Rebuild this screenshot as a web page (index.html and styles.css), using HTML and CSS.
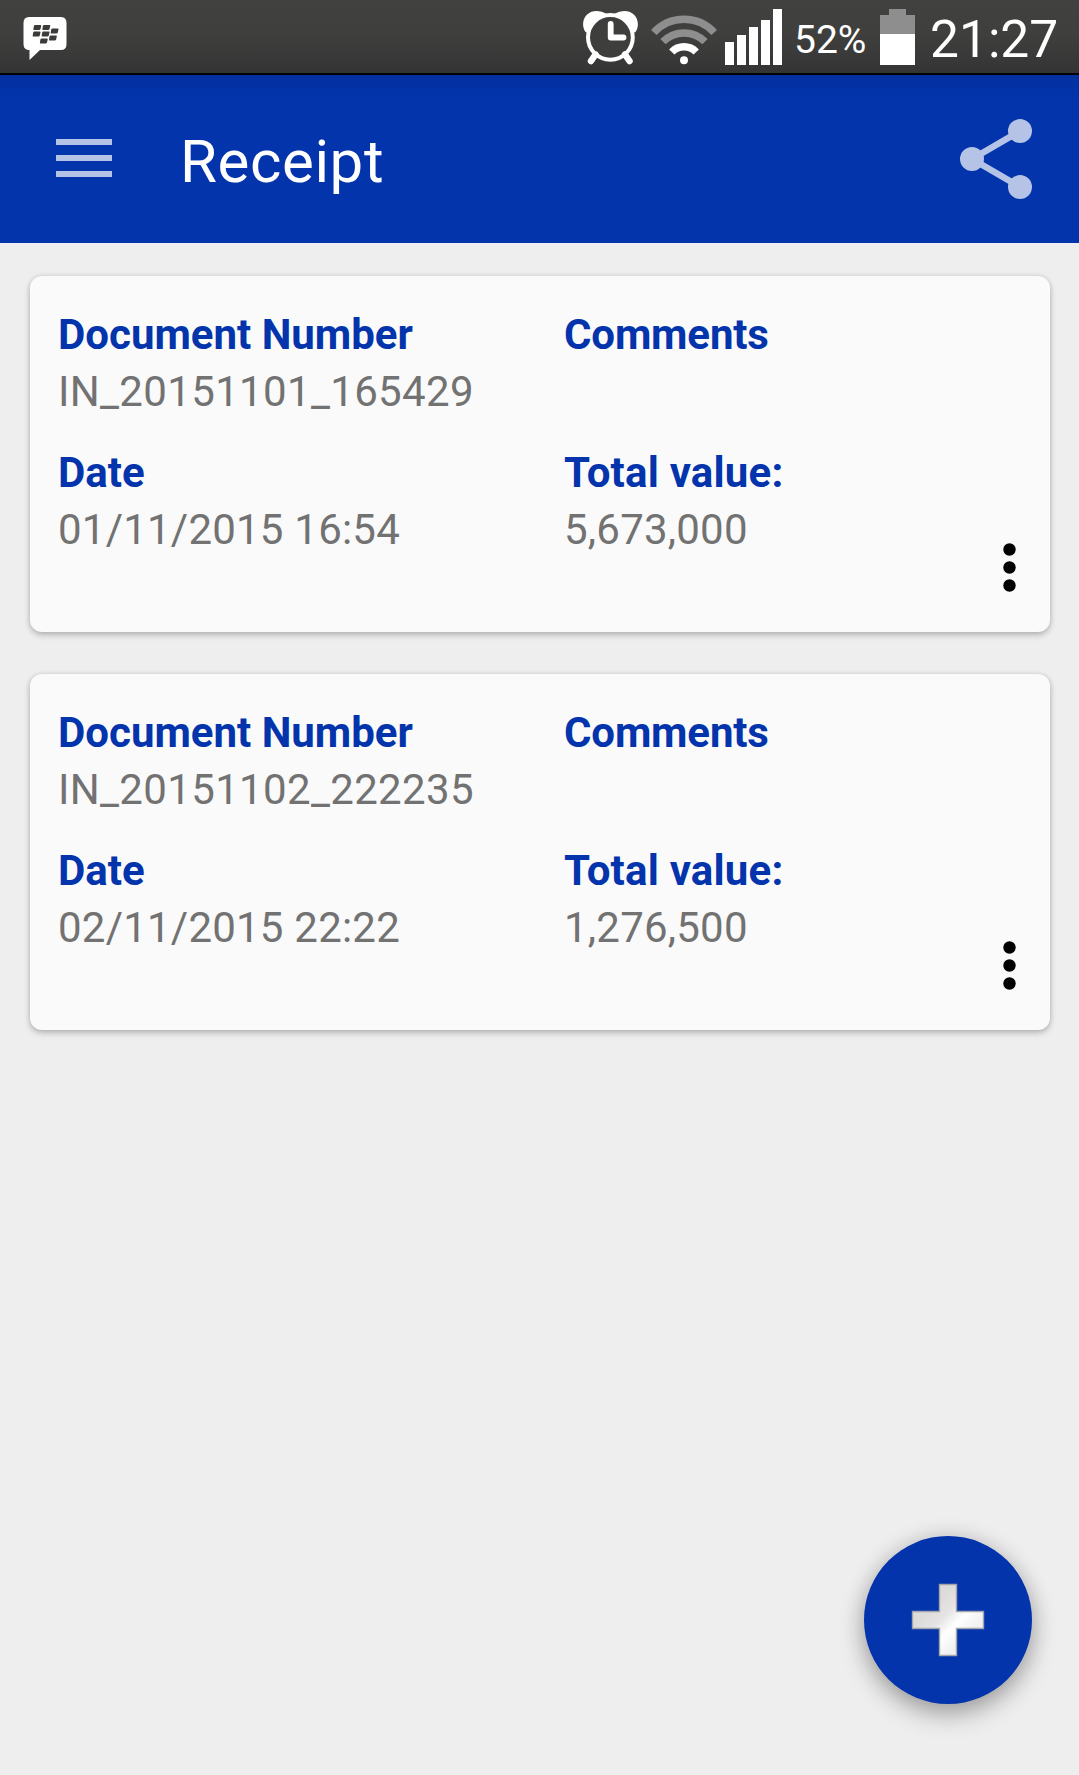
FILE: index.html
```
<!DOCTYPE html>
<html lang="en">
<head>
<meta charset="utf-8">
<title>Receipt</title>
<link rel="stylesheet" href="styles.css">
</head>
<body>
<header class="status-bar">
  <svg class="bbm-icon" width="44" height="44" viewBox="0 0 44 44">
    <path fill="#fff" d="M6 0H38Q43.500 0 43.500 6V27Q43.500 33 38 33H17L6.500 43V33Q0.500 33 0.500 27V6Q0.500 0 6 0Z"/>
    <g fill="#3c3d3b">
      <path d="M12 8h5.500q1 0 .7 1l-.7 3q-.3 1-1.300 1h-5.200q-.8 0-.6-1l.5-3q.2-1 1.100-1z"/>
      <path d="M21 8h5.500q1 0 .7 1l-.7 3q-.3 1-1.300 1h-5.200q-.8 0-.6-1l.5-3q.2-1 1.100-1z"/>
      <path d="M11.300 14.500h5.500q1 0 .7 1l-.7 3q-.3 1-1.300 1h-5.200q-.8 0-.6-1l.5-3q.2-1 1.100-1z"/>
      <path d="M20.300 14.500h5.500q1 0 .7 1l-.7 3q-.3 1-1.300 1h-5.200q-.8 0-.6-1l.5-3q.2-1 1.100-1z"/>
      <path d="M29.300 11.500h5.500q1 0 .7 1l-.7 3q-.3 1-1.300 1h-5.200q-.8 0-.6-1l.5-3q.2-1 1.100-1z"/>
      <path d="M27.600 18.500h5.500q1 0 .7 1l-.7 3q-.3 1-1.300 1h-5.200q-.8 0-.6-1l.5-3q.2-1 1.100-1z"/>
      <path d="M18.500 21.500h5.500q1 0 .7 1l-.7 3q-.3 1-1.300 1h-5.200q-.8 0-.6-1l.5-3q.2-1 1.100-1z"/>
    </g>
  </svg>
  <div class="status-icons">
    <svg width="56" height="56" viewBox="0 0 56 56">
      <path fill="#fff" d="M3.500 23C-2 15 2 2 15 2Q20 2 24 4.500L20 14L10 25ZM53.500 23C59 15 55 2 42 2Q37 2 33 4.500L37 14L47 25Z"/>
      <circle cx="28.400" cy="28.300" r="23.500" fill="#3e3f3d"/>
      <circle cx="28.400" cy="28.300" r="22.400" fill="none" stroke="#fff" stroke-width="4"/>
      <path d="M13.500 45.500l-4.500 6.500M43 45.500l4.500 6.500" stroke="#fff" stroke-width="6.500" stroke-linecap="round"/>
      <path d="M28.700 15V28.500H41.500" fill="none" stroke="#fff" stroke-width="5.800" stroke-linecap="round" stroke-linejoin="round"/>
    </svg>
    <svg class="wifi" width="66" height="50" viewBox="0 0 66 50">
      <g fill="none" stroke-width="7.500">
        <path d="M2.800 17.500A41 41 0 0 1 63.200 17.500" stroke="#8e8e8e"/>
        <path d="M12 26.700A29.500 29.500 0 0 1 54 26.700" stroke="#8e8e8e"/>
        <path d="M20.800 37A17 17 0 0 1 45.200 37" stroke="#fff"/>
      </g>
      <circle cx="33" cy="45.200" r="4" fill="#fff"/>
    </svg>
    <svg class="signal" width="57" height="56" viewBox="0 0 57 56">
      <path fill="#fff" d="M0 33h9v23H0zM12 26h9v30h-9zM24 18h9v38h-9zM36 11h9v45h-9zM48 0h9v56h-9z"/>
    </svg>
    <span class="battery-level">52%</span>
    <svg class="battery" width="35" height="56" viewBox="0 0 35 56">
      <path fill="#8e8e8e" d="M9 0h17v6h9v19H0V6h9z"/>
      <path fill="#fff" d="M0 25h35v31H0z"/>
    </svg>
    <span class="clock">21:27</span>
  </div>
</header>
<nav class="app-bar">
  <svg class="menu" width="56" height="38" viewBox="0 0 56 38"><path fill="#b4c3e6" d="M0 0h56v6H0zM0 16h56v6H0zM0 32h56v6H0z"/></svg>
  <h1 class="title">Receipt</h1>
  <svg class="share" width="72" height="80" viewBox="0 0 72 80">
    <path d="M12 40L60 12M12 40L60 68" stroke="#b4c3e6" stroke-width="6.500"/>
    <g fill="#b4c3e6"><circle cx="12" cy="40" r="12"/><circle cx="60" cy="12" r="12"/><circle cx="60" cy="68" r="12"/></g>
  </svg>
</nav>
<main class="list">
  <article class="card">
    <dl class="fields">
      <div><dt>Document Number</dt><dd class="doc-number">IN_20151101_165429</dd></div>
      <div><dt class="comments">Comments</dt></div>
      <div><dt>Date</dt><dd>01/11/2015 16:54</dd></div>
      <div><dt class="total">Total value:</dt><dd>5,673,000</dd></div>
    </dl>
    <svg class="more" width="13" height="50" viewBox="0 0 13 50"><circle cx="6.500" cy="6.500" r="6.200"/><circle cx="6.500" cy="24.500" r="6.200"/><circle cx="6.500" cy="42.500" r="6.200"/></svg>
  </article>
  <article class="card">
    <dl class="fields">
      <div><dt>Document Number</dt><dd class="doc-number">IN_20151102_222235</dd></div>
      <div><dt class="comments">Comments</dt></div>
      <div><dt>Date</dt><dd>02/11/2015 22:22</dd></div>
      <div><dt class="total">Total value:</dt><dd>1,276,500</dd></div>
    </dl>
    <svg class="more" width="13" height="50" viewBox="0 0 13 50"><circle cx="6.500" cy="6.500" r="6.200"/><circle cx="6.500" cy="24.500" r="6.200"/><circle cx="6.500" cy="42.500" r="6.200"/></svg>
  </article>
</main>
<button class="fab" aria-label="Add">
  <svg width="74" height="74" viewBox="0 0 74 74">
    <defs><linearGradient id="shine" x1="0" y1="0" x2="1" y2="1"><stop offset=".3" stop-color="#dedbdb"/><stop offset=".45" stop-color="#e6e4e4"/><stop offset=".58" stop-color="#fff"/><stop offset=".75" stop-color="#f1efef"/></linearGradient></defs>
    <path d="M28.500 1.500h17v27h27v17h-27v27h-17v-27h-27v-17h27z" fill="url(#shine)" stroke="#a3a5ad" stroke-width="1.400" stroke-linejoin="round"/>
  </svg>
</button>
</body>
</html>
```
FILE: styles.css
```
* { box-sizing: border-box; }
body {
  margin: 0;
  height: 1775px;
  overflow: hidden;
  display: flex;
  flex-direction: column;
  background: #eeeeee;
  font-family: Roboto, "Liberation Sans", sans-serif;
}
svg { display: block; flex: none; }
.status-bar {
  height: 75px;
  flex: none;
  display: flex;
  justify-content: space-between;
  align-items: flex-start;
  padding: 0 21px 0 23px;
  border-bottom: 2px solid #000;
  background: linear-gradient(#41423f 0, #3f403e 45%, #343434 100%);
  color: #fff;
}
.bbm-icon { margin-top: 17px; }
.status-icons { display: flex; align-items: flex-start; padding-top: 9px; }
.wifi { margin: 6px 8px 0 13px; }
.battery-level { width: 72px; margin: 6px 14px 0 12px; font-size: 39px; line-height: 50px; white-space: nowrap; }
.clock { width: 128px; margin: 1px 0 0 15px; font-size: 51.500px; line-height: 60px; white-space: nowrap; }
.app-bar {
  height: 168px;
  flex: none;
  display: flex;
  align-items: center;
  padding: 0 47px 0 56px;
  background: linear-gradient(#0330a0 0, #0334ac 26px);
  color: #fff;
}
.menu { margin-bottom: 2px; }
.title { flex: 1; margin: 6px 0 0 68px; font-size: 60px; font-weight: 400; line-height: 70px; letter-spacing: .6px; }
.list { display: flex; flex-direction: column; gap: 42px; padding: 33px 29px 0 30px; }
.card {
  position: relative;
  height: 356px;
  padding: 30px 28px;
  border-radius: 12px;
  background: #fafafa;
  box-shadow: 0 3px 6px rgba(0, 0, 0, .22), 0 0 5px rgba(0, 0, 0, .1);
}
.fields { margin: 0; display: grid; grid-template-columns: 506px 1fr; grid-auto-rows: 138px; font-size: 42px; line-height: 57px; }
.fields dt { color: #0334ac; font-weight: 700; }
.fields dd { margin: 0; color: #727272; letter-spacing: .22px; }
.fields .doc-number { letter-spacing: .34px; }
.fields .comments { letter-spacing: -.15px; }
.fields .total { letter-spacing: .2px; }
.more { position: absolute; right: 34px; bottom: 39px; }
.fab {
  position: absolute;
  left: 864px;
  top: 1536px;
  width: 168px;
  height: 168px;
  padding: 0;
  border: 0;
  border-radius: 50%;
  display: grid;
  place-items: center;
  background: #0334ac;
  box-shadow: 0 11px 24px rgba(0, 0, 0, .28), 0 0 22px rgba(0, 0, 0, .13);
}
```
